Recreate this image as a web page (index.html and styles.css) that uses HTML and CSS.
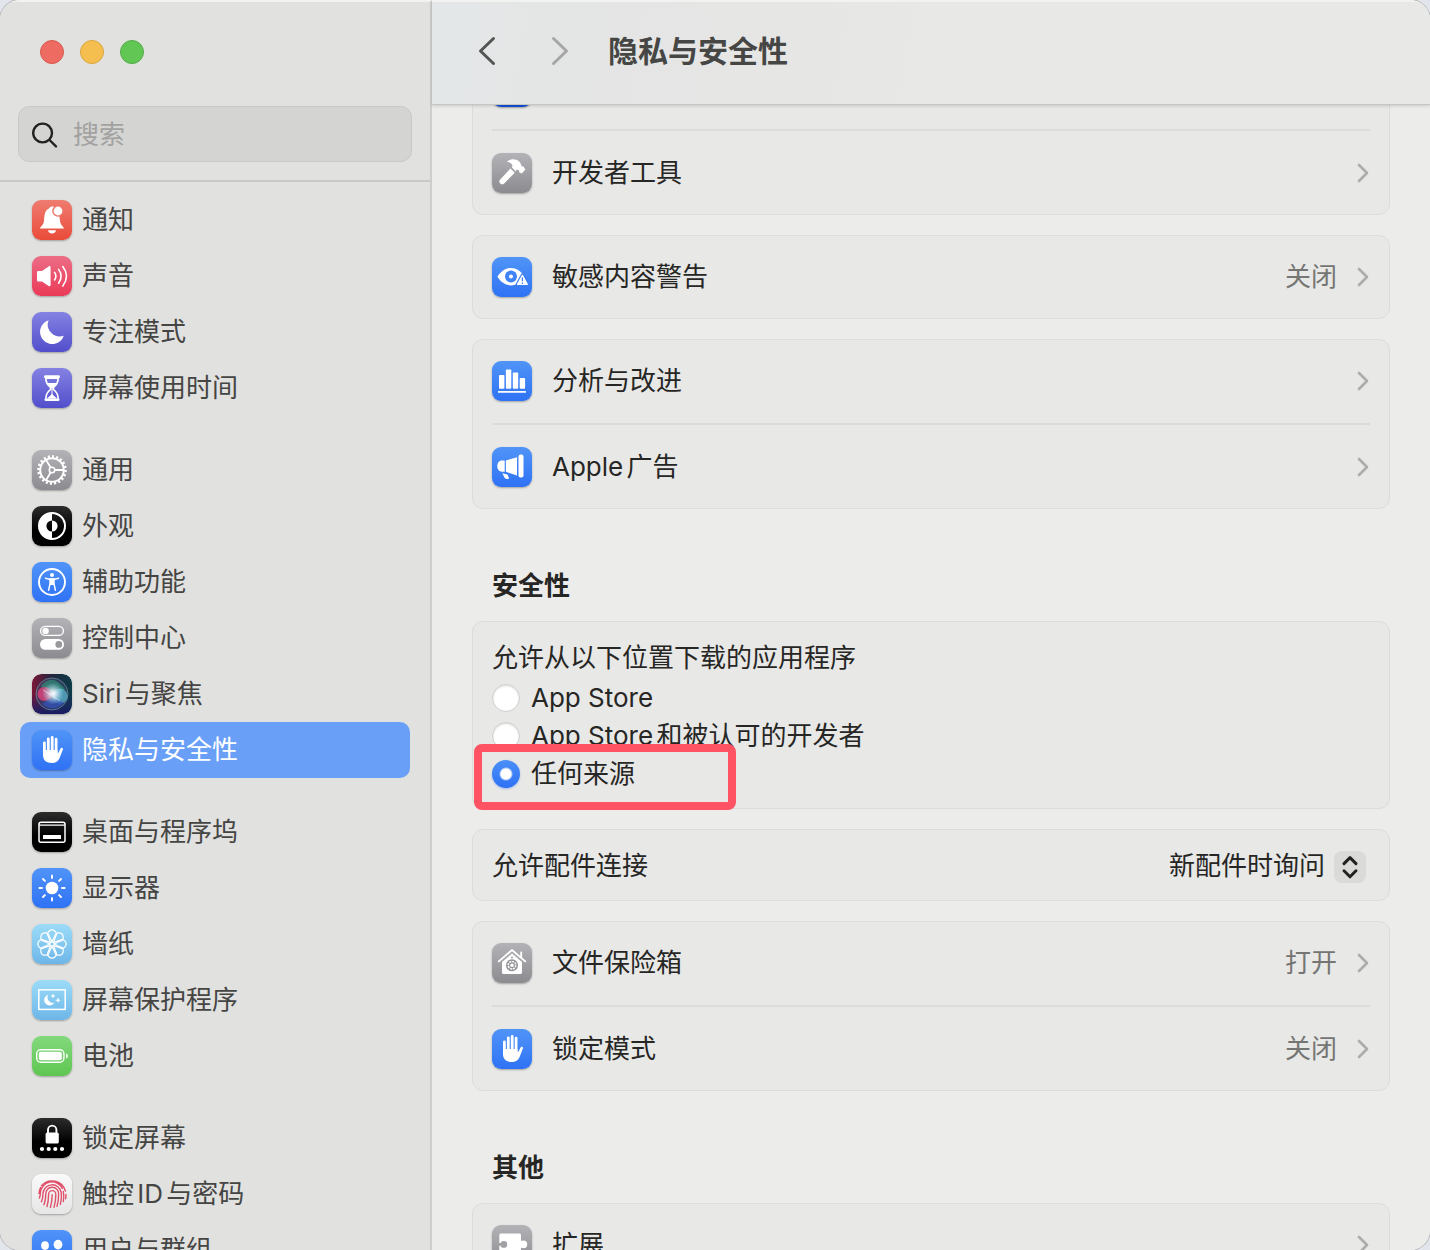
FILE: index.html
```
<!DOCTYPE html>
<html lang="zh-CN">
<head>
    <meta charset="UTF-8">
    <meta name="viewport" content="width=device-width, initial-scale=1.0">
    <title>隐私与安全性</title>
    <link rel="stylesheet" href="styles.css">
</head>
<body>
<!-- Mehrfach verwendete Symbole -->
<svg class="defs" aria-hidden="true">
    <symbol id="hand" viewBox="0 0 40 40">
        <path d="M12.4 12.8V23M16.3 8.8V22M20.2 7.4V22M24.1 9.2V23" fill="none" stroke="#fff" stroke-width="2.8" stroke-linecap="round"/>
        <path d="M11 20H25.5V23.4C27 22.8 27.6 19.6 28.8 18.2 29.8 17.2 31.4 18 30.9 19.6L27.6 28C26.2 31.6 23.6 33 20 33 14 33 11 30 11 25z" fill="#fff"/>
    </symbol>
    <symbol id="chevron" viewBox="0 0 12 20">
        <path d="M2 2l8 8-8 8" fill="none" stroke="currentColor" stroke-width="2.6" stroke-linecap="round" stroke-linejoin="round"/>
    </symbol>
</svg>

<div class="window">
    <aside class="sidebar">
        <div class="lights">
            <button class="light close" aria-label="关闭窗口"></button>
            <button class="light minimize" aria-label="最小化"></button>
            <button class="light zoom" aria-label="缩放"></button>
        </div>
        <label class="search">
            <svg viewBox="0 0 28 28"><circle cx="11.6" cy="12" r="9.4"/><path d="M18.6 19l6.4 6.4"/></svg>
            <input type="search" placeholder="搜索" aria-label="搜索">
        </label>

        <nav class="nav">
            <div class="nav-group">
                <a class="nav-item" href="#">
                    <svg class="tile red" viewBox="0 0 40 40">
                        <path d="M8 28.6C8 26.6 11.4 25.6 12 21 12.5 15 12.6 10.4 17.2 8.2 18 6.4 20.4 6 21.8 6.8 27 10 27.4 15 28 21 28.6 25.6 32 26.6 32 28.6z" fill="#fff"/>
                        <circle cx="26" cy="11" r="5.8" fill="#ef7466"/><circle cx="26" cy="11" r="4.4" fill="#fff"/>
                        <path d="M16 30.2h8c-.6 4.4-7.4 4.4-8 0z" fill="#fff"/>
                    </svg>
                    通知
                </a>
                <a class="nav-item" href="#">
                    <svg class="tile pink" viewBox="0 0 40 40">
                        <path d="M6.5 15H10l6.6-4.6c1-.7 2-.2 2 .9v17.8c0 1.1-1 1.6-2 .9L10 25.4H6.5c-1 0-1.5-.5-1.5-1.5v-7.4c0-1 .5-1.5 1.5-1.5z" fill="#fff"/>
                        <path d="M22.6 16.4q2.6 3.8 0 7.6M26.6 13.4q5 6.8 0 13.8M30.8 10.6q7.4 9.6 0 19.4" fill="none" stroke="#fff" stroke-width="1.6" stroke-linecap="round"/>
                    </svg>
                    声音
                </a>
                <a class="nav-item" href="#">
                    <svg class="tile indigo" viewBox="0 0 40 40">
                        <path d="M16.6 8.2A12.2 12.2 0 1 0 31.8 23.8 12 12 0 0 1 16.6 8.2z" fill="#fff"/>
                    </svg>
                    专注模式
                </a>
                <a class="nav-item" href="#">
                    <svg class="tile indigo" viewBox="0 0 40 40">
                        <path d="M13.8 9c0 6 1.6 7.6 4.8 10.4v2C15.4 24 13.8 26 13.8 31.6h12.4C26.2 26 24.6 24 21.4 21.4v-2C24.6 16.6 26.2 15 26.2 9z" fill="none" stroke="#fff" stroke-width="1.7"/>
                        <path d="M12 8.6q0-1.4 1.4-1.4h13.2q1.4 0 1.4 1.4 0 2-1.8 2.4H13.8Q12 10.6 12 8.6zM15.4 15h9.2q-1.2 2.4-4.6 5.4-3.400-3-4.600-5.400zM15 30.800c1-2 3.400-2.600 5-5 1.600 2.400 4 3 5 5zM12.400 31h15.200v.6q0 1.400-1.400 1.400H13.800q-1.400 0-1.400-1.400z" fill="#fff"/>
                        <path d="M20 20v7" stroke="#fff"/>
                    </svg>
                    屏幕使用时间
                </a>
            </div>

            <div class="nav-group">
                <a class="nav-item" href="#">
                    <svg class="tile gray" viewBox="0 0 40 40" fill="none" stroke="#fff">
                        <circle cx="20" cy="20" r="11.8" stroke-width="2"/>
                        <circle cx="20" cy="20" r="13.6" stroke-width="2.4" pathLength="100" stroke-dasharray="2.5 2.5"/>
                        <circle cx="20" cy="20" r="2.7" stroke-width="1.6"/>
                        <path d="M22.6 20H32M18.7 17.7L14 9.6M18.7 22.3L14 30.4" stroke-width="1.8"/>
                    </svg>
                    通用
                </a>
                <a class="nav-item" href="#">
                    <svg class="tile black" viewBox="0 0 40 40">
                        <circle cx="20" cy="20" r="13" fill="none" stroke="#fff" stroke-width="2"/>
                        <path d="M20 7a13 13 0 0 0 0 26v-7.4a5.6 5.6 0 0 1 0-11.200zM20 14.400a5.600 5.600 0 0 1 0 11.200z" fill="#fff"/>
                    </svg>
                    外观
                </a>
                <a class="nav-item" href="#">
                    <svg class="tile blue" viewBox="0 0 40 40">
                        <circle cx="20" cy="20" r="13" fill="none" stroke="#fff" stroke-width="1.9"/>
                        <circle cx="20" cy="13" r="2" fill="#fff"/>
                        <path d="M13.6 16.2l4.6 1.2h3.6l4.6-1.200" fill="none" stroke="#fff" stroke-width="1.6" stroke-linecap="round"/>
                        <path d="M18 17h4v5l1.4 6.2M18 17v5l-1.4 6.2" fill="none" stroke="#fff" stroke-width="1.5" stroke-linecap="round"/>
                        <path d="M18 17h4v6h-4z" fill="#fff"/>
                    </svg>
                    辅助功能
                </a>
                <a class="nav-item" href="#">
                    <svg class="tile gray" viewBox="0 0 40 40">
                        <rect x="8.6" y="8.4" width="22.8" height="9" rx="4.5" fill="none" stroke="#fff" stroke-width="1.4"/>
                        <circle cx="13.6" cy="12.9" r="3.2" fill="#fff"/>
                        <rect x="8" y="21" width="24" height="10.8" rx="5.4" fill="#fff"/>
                        <circle cx="26.8" cy="26.4" r="3.4" fill="#98989c"/>
                    </svg>
                    控制中心
                </a>
                <a class="nav-item" href="#">
                    <svg class="tile" viewBox="0 0 40 40">
                        <defs>
                            <linearGradient id="siriBack" x1="0" y1="0" x2="1" y2="0">
                                <stop offset="0" stop-color="#7c1638"/><stop offset=".5" stop-color="#22263f"/><stop offset="1" stop-color="#0d3b48"/>
                            </linearGradient>
                            <radialGradient id="siriGlow">
                                <stop offset="0" stop-color="#fff"/><stop offset=".3" stop-color="#e8f2fb" stop-opacity=".8"/><stop offset="1" stop-color="#8fd4ee" stop-opacity="0"/>
                            </radialGradient>
                            <linearGradient id="siriLow" x1="0" y1="0" x2="0" y2="1">
                                <stop offset=".5" stop-color="#1c2a6c" stop-opacity="0"/><stop offset="1" stop-color="#191b63"/>
                            </linearGradient>
                        </defs>
                        <rect width="40" height="40" rx="9" fill="url(#siriBack)"/>
                        <rect width="40" height="40" rx="9" fill="url(#siriLow)"/>
                        <circle cx="20" cy="20" r="16" fill="#44507b" fill-opacity=".45" stroke="#79a8b4" stroke-opacity=".6"/>
                        <path d="M9 12Q20-2 33 15 27 22 20 18 13 20 9 12z" fill="#2f9c7c" fill-opacity=".6"/>
                        <circle cx="12.5" cy="20" r="7" fill="#e0457c" fill-opacity=".8"/>
                        <circle cx="28" cy="22" r="7.5" fill="#5cbcd4" fill-opacity=".7"/>
                        <path d="M10 30Q20 20 32 29 21 39 10 30z" fill="#3655bd" fill-opacity=".7"/>
                        <circle cx="21" cy="19.5" r="11" fill="url(#siriGlow)"/>
                        <path d="M11 16q8 5 17 11" stroke="#fff" stroke-opacity=".5" fill="none"/>
                    </svg>
                    Siri与聚焦
                </a>
                <a class="nav-item active" href="#" aria-current="page">
                    <svg class="tile blue"><use href="#hand"/></svg>
                    隐私与安全性
                </a>
            </div>

            <div class="nav-group">
                <a class="nav-item" href="#">
                    <svg class="tile black" viewBox="0 0 40 40">
                        <rect x="7" y="10.2" width="26" height="20" rx="2" fill="none" stroke="#fff" stroke-width="1.5"/>
                        <path d="M7 13.2h26" stroke="#fff" stroke-width="1.2"/>
                        <rect x="11" y="23" width="18" height="4" rx=".6" fill="#fff"/>
                    </svg>
                    桌面与程序坞
                </a>
                <a class="nav-item" href="#">
                    <svg class="tile blue" viewBox="0 0 40 40">
                        <circle cx="20" cy="20" r="6.3" fill="#fff"/>
                        <path d="M20 10V7.4M20 30v2.6M10 20H7.4M30 20h2.6M12.9 12.9L11 11M27.1 12.9L29 11M12.9 27.1L11 29M27.1 27.1L29 29" stroke="#fff" stroke-width="1.9" stroke-linecap="round"/>
                    </svg>
                    显示器
                </a>
                <a class="nav-item" href="#">
                    <svg class="tile sky" viewBox="0 0 40 40" fill="none" stroke="#fff" stroke-width="1.2">
                        <path id="petal" d="M18.4 18.4L16.400 12.600a4.300 4.300 0 1 1 7.200 0L21.600 18.400"/>
                        <use href="#petal" transform="rotate(45 20 20)"/>
                        <use href="#petal" transform="rotate(90 20 20)"/>
                        <use href="#petal" transform="rotate(135 20 20)"/>
                        <use href="#petal" transform="rotate(180 20 20)"/>
                        <use href="#petal" transform="rotate(225 20 20)"/>
                        <use href="#petal" transform="rotate(270 20 20)"/>
                        <use href="#petal" transform="rotate(315 20 20)"/>
                        <circle cx="20" cy="20" r="2.2"/>
                    </svg>
                    墙纸
                </a>
                <a class="nav-item" href="#">
                    <svg class="tile sky" viewBox="0 0 40 40">
                        <rect x="6.8" y="9.8" width="26.4" height="19.6" fill="none" stroke="#fff" stroke-width="1.5"/>
                        <path d="M16.4 14.8a5.4 5.4 0 1 0 6 7.8 5.2 5.2 0 0 1-6-7.8z" fill="#fff"/>
                        <path d="M21 13.4l.7 1.9 1.9.7-1.9.7-.7 1.9-.7-1.9-1.9-.7 1.9-.7zM26 17.4l.8 2 2 .8-2 .8-.8 2-.8-2-2-.8 2-.8z" fill="#fff"/>
                    </svg>
                    屏幕保护程序
                </a>
                <a class="nav-item" href="#">
                    <svg class="tile green" viewBox="0 0 40 40">
                        <rect x="4.7" y="13.7" width="27.2" height="12.6" rx="4" fill="none" stroke="#fff" stroke-width="1.4"/>
                        <rect x="6.8" y="15.8" width="23" height="8.4" rx="2" fill="#fff"/>
                        <path d="M34 17.6q2 .6 2 2.4t-2 2.400z" fill="#fff"/>
                    </svg>
                    电池
                </a>
            </div>

            <div class="nav-group">
                <a class="nav-item" href="#">
                    <svg class="tile black" viewBox="0 0 40 40">
                        <rect x="13.6" y="14.6" width="13.2" height="11" rx="1.6" fill="#fff"/>
                        <path d="M16 15v-3.200a4.200 4.200 0 0 1 8.400 0V15" fill="none" stroke="#fff" stroke-width="1.9"/>
                        <path d="M10 31h.01M16.7 31h.01M23.3 31h.01M30 31h.01" stroke="#fff" stroke-width="4.2" stroke-linecap="round"/>
                    </svg>
                    锁定屏幕
                </a>
                <a class="nav-item" href="#">
                    <svg class="tile white" viewBox="0 0 40 40" fill="none" stroke="#e0506a" stroke-width="1.4" stroke-linecap="round">
                        <path d="M9.4 11.8A14 14 0 0 1 33.4 17M7 19.5a13 13 0 0 1 1.6-6M7.4 24q1-2.400 1-5a11.600 11.600 0 0 1 22-4.600M31.300 17.500q1 5 0 10M34 20.500q0 2.200-.4 4.200"/>
                        <path d="M9.4 27.8Q11 24 11 19.400a9.200 9.200 0 0 1 18.200-1.200c.6 4.400.4 8-.8 12.200M12 30.800q1.800-5 1.800-11a6.400 6.400 0 0 1 12.800-.4q.2 6.600-1.600 13"/>
                        <path d="M15 32.6q1.6-6 1.6-12.400a3.600 3.600 0 0 1 7.200 0q0 7-1.800 13.200M18.400 33.400q1.800-6.600 1.800-12.800"/>
                    </svg>
                    触控ID与密码
                </a>
                <a class="nav-item" href="#">
                    <svg class="tile blue" viewBox="0 0 40 40" fill="#fff">
                        <ellipse cx="13" cy="15.6" rx="3.9" ry="4.3"/><ellipse cx="26" cy="14.6" rx="4.4" ry="4.8"/>
                        <path d="M16 30c0-6 4-9 10-9s10 3 10 9zM5 29c0-5 3-7 8-7l3 .6c-2 2-3 4-3 6.4z"/>
                    </svg>
                    用户与群组
                </a>
            </div>
        </nav>
    </aside>

    <main class="main">
        <header class="toolbar">
            <button class="step back" aria-label="返回"><svg viewBox="0 0 24 30"><path d="M17.500 2.500L4.500 15l13 12.500"/></svg></button>
            <button class="step forward" aria-label="前进"><svg viewBox="0 0 24 30"><path d="M5.500 2.500l13 12.500-13 12.500"/></svg></button>
            <h1>隐私与安全性</h1>
        </header>

        <div class="content">
            <section class="card">
                <div class="row"><span class="tile deep"></span></div>
                <a class="row" href="#">
                    <svg class="tile gray" viewBox="0 0 40 40" fill="#fff">
                        <path d="M18.4 15.6l4.4 4.2-10.6 10.6c-1.4 1.3-3 1-4 0s-1.4-2.600 0-4z"/>
                        <path d="M14.6 9.2C17.6 5.4 24 5.4 27.2 8.4c1.8 1.6 1.6 3.4 2.6 4.8l1.6.4 2 2.8-3.600 4.200-2.600-1.400-.4-2.200-2.200-.2-.8 1.600-4-4.200.8-1.600C19.600 10 17.600 8.800 14.600 9.200z"/>
                    </svg>
                    <span class="name">开发者工具</span>
                    <svg class="chevron"><use href="#chevron"/></svg>
                </a>
            </section>

            <section class="card">
                <a class="row" href="#">
                    <svg class="tile blue" viewBox="0 0 40 40">
                        <path d="M5.4 19.8C9 14 13.6 11 19 11s10 3 13.4 8.8C29 25.4 24.4 28.4 19 28.4S9 25.4 5.4 19.8z" fill="#fff"/>
                        <circle cx="19" cy="19.6" r="6" fill="#3f83f6"/><circle cx="19" cy="19.6" r="2" fill="#fff"/>
                        <path d="M30.4 18.4l4.9 9h-9.8z" fill="#fff" stroke="#3d80f5" stroke-width="3.6" stroke-linejoin="round"/>
                        <path d="M30.4 18.4l4.9 9h-9.8z" fill="#fff" stroke="#fff" stroke-width="1.2" stroke-linejoin="round"/>
                        <path d="M30.4 20.6v3.6M30.4 25.6V27" stroke="#3d80f5" stroke-width="1.3"/>
                    </svg>
                    <span class="name">敏感内容警告</span>
                    <span class="value">关闭</span>
                    <svg class="chevron"><use href="#chevron"/></svg>
                </a>
            </section>

            <section class="card">
                <a class="row" href="#">
                    <svg class="tile blue" viewBox="0 0 40 40" fill="#fff">
                        <rect x="7" y="14" width="5.4" height="13.8" rx=".8"/><rect x="13.9" y="8.4" width="5.4" height="19.4" rx=".8"/>
                        <rect x="20.8" y="11.4" width="5.4" height="16.4" rx=".8"/><rect x="27.7" y="17" width="5.4" height="10.8" rx=".8"/>
                        <rect x="6" y="30" width="28" height="1.8" rx=".6"/>
                    </svg>
                    <span class="name">分析与改进</span>
                    <svg class="chevron"><use href="#chevron"/></svg>
                </a>
                <a class="row" href="#">
                    <svg class="tile blue" viewBox="0 0 40 40" fill="#fff">
                        <path d="M12.7 13.4v11.4H10c-3 0-4.700-2.400-4.700-5.700s1.700-5.700 4.700-5.700zM13.900 13.400L25 10.200v18.400l-11.100-3.800zM10.400 26.200l5 1.400 1.800 3.600q-3.200 2-4.800-.6z"/>
                        <rect x="26.5" y="7.4" width="5" height="23" rx="2"/>
                    </svg>
                    <span class="name">Apple广告</span>
                    <svg class="chevron"><use href="#chevron"/></svg>
                </a>
            </section>

            <h2>安全性</h2>
            <fieldset class="card sources">
                <legend>允许从以下位置下载的应用程序</legend>
                <label class="option"><input type="radio" name="source">App Store</label>
                <label class="option"><input type="radio" name="source">App Store和被认可的开发者</label>
                <label class="option marked"><input type="radio" name="source" checked>任何来源</label>
            </fieldset>

            <section class="card">
                <div class="row compact">
                    <label class="name" for="accessory">允许配件连接</label>
                    <div class="picker">
                        <select id="accessory"><option>新配件时询问</option></select>
                        <svg viewBox="0 0 32 32"><path d="M10 12.6l6-6 6 6M10 19.8l6 6 6-6"/></svg>
                    </div>
                </div>
            </section>

            <section class="card">
                <a class="row" href="#">
                    <svg class="tile gray" viewBox="0 0 40 40">
                        <path d="M6.8 18.4L20 7l13.2 11.4M29.2 14V9.4" fill="none" stroke="#fff" stroke-width="1.9" stroke-linecap="round" stroke-linejoin="round"/>
                        <path d="M20 10.6L30 19v10.4q0 1.600-1.600 1.600H11.600Q10 31 10 29.400V19z" fill="#fff"/>
                        <circle cx="20" cy="22.2" r="6" fill="#929296"/>
                        <circle cx="20" cy="22.2" r="3.8" fill="none" stroke="#fff" stroke-width="1.5" pathLength="80" stroke-dasharray="7 3"/>
                        <circle cx="20" cy="22.2" r="1.8" fill="#fff"/>
                        <circle cx="20" cy="14.4" r=".9" fill="#929296"/>
                    </svg>
                    <span class="name">文件保险箱</span>
                    <span class="value">打开</span>
                    <svg class="chevron"><use href="#chevron"/></svg>
                </a>
                <a class="row" href="#">
                    <svg class="tile blue"><use href="#hand"/></svg>
                    <span class="name">锁定模式</span>
                    <span class="value">关闭</span>
                    <svg class="chevron"><use href="#chevron"/></svg>
                </a>
            </section>

            <h2>其他</h2>
            <section class="card">
                <a class="row" href="#">
                    <svg class="tile gray" viewBox="0 0 40 40">
                        <rect x="7.3" y="8.4" width="21.7" height="23" rx="1.6" fill="#fff"/>
                        <circle cx="31.4" cy="19.4" r="3.8" fill="#fff"/><path d="M28 18h3v3h-3z" fill="#fff"/>
                        <circle cx="11.8" cy="19.4" r="3.4" fill="#a1a1a5"/><path d="M7 18h3v2.8H7z" fill="#a1a1a5"/>
                    </svg>
                    <span class="name">扩展</span>
                    <svg class="chevron"><use href="#chevron"/></svg>
                </a>
            </section>
        </div>
    </main>
</div>
</body>
</html>
```
FILE: styles.css
```
:root {
    --sidebar: #e1e1df;
    --panel: #ececea;
    --card: #e8e8e6;
    --line: #dcdcda;
    --text: #262625;
    --muted: #757573;
    --accent: #6a9ff8;
    --mark: #ff5263;
}

*,
*::after {
    margin: 0;
    padding: 0;
    box-sizing: border-box;
}

body {
    background: #e2e5ec;
    color: var(--text);
    font-family: Inter, "Noto Sans CJK SC", sans-serif;
    font-size: 26px;
    line-height: 38px;
    text-autospace: normal;
}

button,
input,
select {
    font: inherit;
    color: inherit;
    background: none;
    border: none;
    outline: none;
}

a {
    color: inherit;
    text-decoration: none;
}

.defs {
    display: none;
}

.window {
    display: flex;
    height: 100vh;
    overflow: hidden;
    border-radius: 20px;
    box-shadow: 0 0 0 1px #b8b8b8;
}

/* Seitenleiste */
.sidebar {
    display: flex;
    flex-direction: column;
    flex: 0 0 432px;
    min-width: 0;
    border-top: 2px solid #f2f2f1;
    border-right: 2px solid #cececc;
    background: var(--sidebar);
    color: #454544;
}

.lights {
    display: flex;
    gap: 16px;
    padding: 38px 40px 42px;
}

.light {
    width: 24px;
    height: 24px;
    border-radius: 50%;
}

.close {
    background: #ed6b60;
    border: 1px solid #d9584e;
}

.minimize {
    background: #f5bf50;
    border: 1px solid #dca53c;
}

.zoom {
    background: #62c655;
    border: 1px solid #4fae43;
}

.search {
    display: flex;
    align-items: center;
    gap: 14px;
    height: 56px;
    margin: 0 18px 18px;
    padding: 2px 12px 0;
    border: 1px solid #c9c9c7;
    border-radius: 11px;
    background: #d4d4d2;
}

.search svg {
    flex: none;
    width: 28px;
    height: 28px;
    fill: none;
    stroke: #222;
    stroke-width: 2.4;
    stroke-linecap: round;
}

.search input {
    flex: 1;
    width: 100%;
    min-width: 0;
}

.search input::placeholder {
    color: #a2a2a0;
}

.nav {
    display: flex;
    flex: 1;
    flex-direction: column;
    gap: 26px;
    min-height: 0;
    overflow: hidden;
    padding: 10px 20px 0;
    border-top: 2px solid #c8c8c6;
}

.nav-item {
    display: flex;
    align-items: center;
    gap: 10px;
    height: 56px;
    padding: 0 12px;
    border-radius: 10px;
}

.nav-item.active {
    background: var(--accent);
    color: #fff;
}

/* Symbolkacheln */
.tile {
    flex: none;
    width: 40px;
    height: 40px;
    border-radius: 9px;
    box-shadow: 0 1px 2px rgba(0, 0, 0, 0.3);
}

.red { background: linear-gradient(#ee7c70, #ea4b39); }
.pink { background: linear-gradient(#ec6d86, #ea3a57); }
.indigo { background: linear-gradient(#8582e3, #524ecb); }
.gray { background: linear-gradient(#b3b3b7, #8b8b90); }
.black { background: linear-gradient(#2c2c2c, #000 60%); }
.blue { background: linear-gradient(#5094f8, #2f72f5); }
.sky { background: linear-gradient(#9ddcf8, #6db6e8); }
.green { background: linear-gradient(#83d97c, #5ec652); }
.white { background: linear-gradient(#fafafa, #e6e6e6); }
.deep { background: #1250d8; }

/* Hauptbereich */
.main {
    display: flex;
    flex: 1;
    flex-direction: column;
    min-width: 0;
    background: var(--panel);
}

.toolbar {
    position: relative;
    z-index: 1;
    display: flex;
    flex: none;
    align-items: center;
    height: 105px;
    padding: 0 44px 4px;
    border-top: 2px solid #f2f2f1;
    border-bottom: 1px solid #c6c6c4;
    background: linear-gradient(100deg, #e4e7e8, #e4e5e4 20%, #e8e8e6 50%);
    box-shadow: 0 1px 3px rgba(0, 0, 0, 0.15);
}

.step {
    width: 24px;
    height: 30px;
    margin-right: 48px;
}

.step svg {
    display: block;
    width: 24px;
    height: 30px;
    fill: none;
    stroke: currentColor;
    stroke-width: 3;
    stroke-linecap: round;
    stroke-linejoin: round;
}

.back {
    color: #545453;
}

.forward {
    margin-right: 36px;
    color: #a6a6a5;
}

h1 {
    color: #464645;
    font-size: 30px;
    line-height: 40px;
}

.content {
    display: flex;
    flex: 1;
    flex-direction: column;
    gap: 20px;
    min-height: 0;
    /* Liste ist bereits ein Stück gescrollt */
    margin-top: -60px;
    padding: 0 40px;
    overflow: hidden;
}

.card {
    flex: none;
    padding: 0 19px;
    border: 1px solid var(--line);
    border-radius: 11px;
    background: var(--card);
}

.row {
    display: flex;
    align-items: center;
    min-height: 82px;
}

.row + .row {
    min-height: 85px;
    margin-top: 1px;
    border-top: 2px solid var(--line);
    padding-top: 1px;
}

.row.compact {
    min-height: 70px;
    padding: 2px 4px 0 0;
}

.tile + .name {
    margin-left: 20px;
}

.name {
    flex: 1;
}

.value {
    margin-right: 20px;
    color: var(--muted);
}

.chevron {
    width: 12px;
    height: 20px;
    margin-right: 1px;
    color: #acacaa;
}

h2 {
    flex: none;
    padding: 41px 20px 0;
    font-size: 26px;
    line-height: 31px;
}

/* Quellen für Apps */
.sources {
    display: flex;
    flex-direction: column;
    padding: 17px 19px 15px;
}

.sources legend {
    float: left;
    height: 40px;
}

.option {
    display: flex;
    align-items: center;
    align-self: flex-start;
    gap: 11px;
}

.option input {
    appearance: none;
    width: 28px;
    height: 28px;
    border: 1px solid #cfcfcd;
    border-radius: 50%;
    background: #fff;
    box-shadow: inset 0 1px 2px rgba(0, 0, 0, 0.15);
}

.option input:checked {
    border: none;
    background: radial-gradient(circle, #fff 5px, transparent 7px), linear-gradient(#4a8ff8, #2f72f5);
    box-shadow: 0 1px 2px rgba(47, 114, 245, 0.4);
}

.marked {
    position: relative;
}

.marked::after {
    content: "";
    position: absolute;
    top: -11px;
    left: -18px;
    width: 262px;
    height: 66px;
    border: 8px solid var(--mark);
    border-radius: 8px;
    pointer-events: none;
}

.picker {
    position: relative;
}

.picker select {
    display: block;
    height: 38px;
    padding-right: 40px;
    appearance: none;
}

.picker svg {
    position: absolute;
    top: 4px;
    right: 0;
    width: 32px;
    height: 32px;
    border-radius: 8px;
    background: #dadad8;
    fill: none;
    stroke: #222;
    stroke-width: 3;
    stroke-linecap: round;
    stroke-linejoin: round;
    pointer-events: none;
}
```
